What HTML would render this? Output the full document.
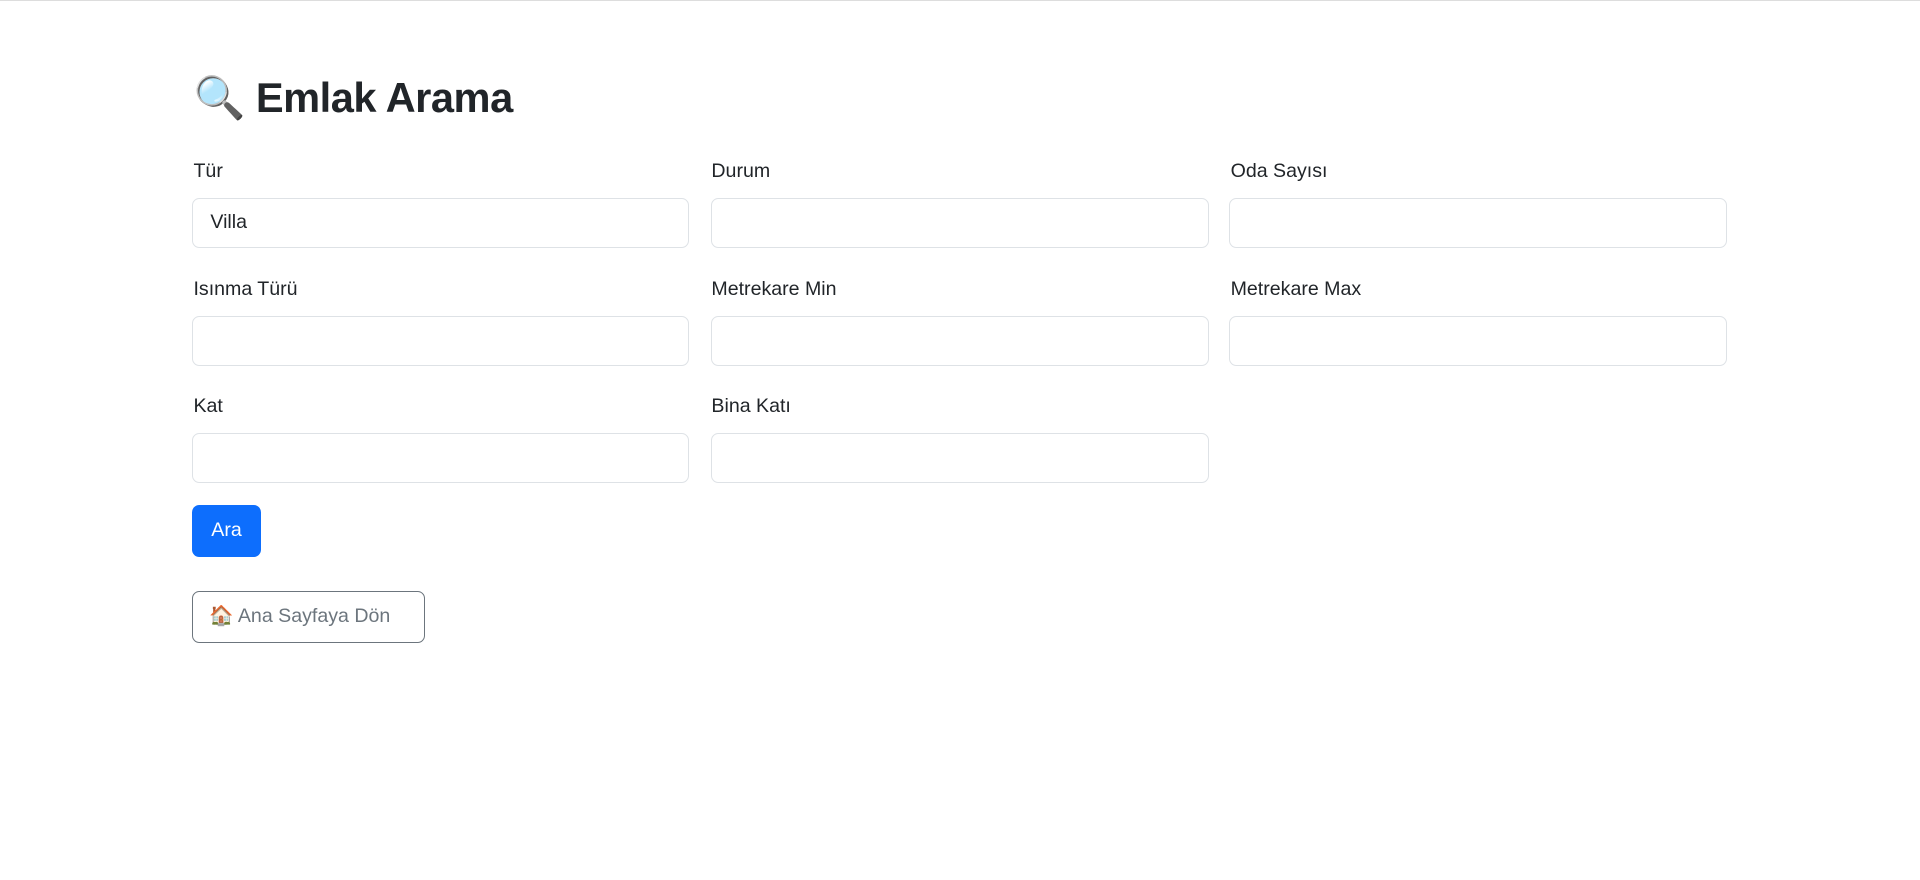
<!DOCTYPE html>
<html><head><meta charset="utf-8"><style>
html,body{margin:0;padding:0;background:#fff;}
body{width:1920px;height:880px;overflow:hidden;border-top:1px solid #ddd;box-sizing:border-box;}
#w{zoom:1.2245;position:relative;width:1568px;height:718px;font-family:"Liberation Sans",sans-serif;color:#212529;}
h1{position:absolute;left:158px;top:57px;margin:0;font-size:34px;font-weight:bold;line-height:44px;letter-spacing:-0.4px;}
.lbl{position:absolute;font-size:16px;line-height:20px;}
.inp{position:absolute;width:406px;height:41px;border:1px solid #dee2e6;border-radius:6px;box-sizing:border-box;font-size:16px;line-height:39px;padding-left:14px;}
.btn{position:absolute;border-radius:6px;box-sizing:border-box;font-size:16px;text-align:center;}
</style></head><body><div id="w">
<h1><span style="font-family:'Noto Color Emoji','DejaVu Sans',sans-serif;font-weight:normal">🔍</span> Emlak Arama</h1>
<div class="lbl" style="left:158px;top:129px">Tür</div>
<div class="lbl" style="left:581px;top:129px">Durum</div>
<div class="lbl" style="left:1005px;top:129px">Oda Sayısı</div>
<div class="inp" style="left:157px;top:161px">Villa</div>
<div class="inp" style="left:581px;top:161px"></div>
<div class="inp" style="left:1004px;top:161px"></div>
<div class="lbl" style="left:158px;top:225px">Isınma Türü</div>
<div class="lbl" style="left:581px;top:225px">Metrekare Min</div>
<div class="lbl" style="left:1005px;top:225px">Metrekare Max</div>
<div class="inp" style="left:157px;top:257px"></div>
<div class="inp" style="left:581px;top:257px"></div>
<div class="inp" style="left:1004px;top:257px"></div>
<div class="lbl" style="left:158px;top:321px">Kat</div>
<div class="lbl" style="left:581px;top:321px">Bina Katı</div>
<div class="inp" style="left:157px;top:353px"></div>
<div class="inp" style="left:581px;top:353px"></div>
<div class="btn" style="left:157px;top:412px;width:56px;height:42px;background:#0d6efd;color:#fff;line-height:42px">Ara</div>
<div class="btn" style="left:157px;top:482px;width:190px;height:42px;border:1px solid #6c757d;color:#6c757d;line-height:40px;text-align:left;padding-left:13px">🏠 Ana Sayfaya Dön</div>
</div></body></html>
